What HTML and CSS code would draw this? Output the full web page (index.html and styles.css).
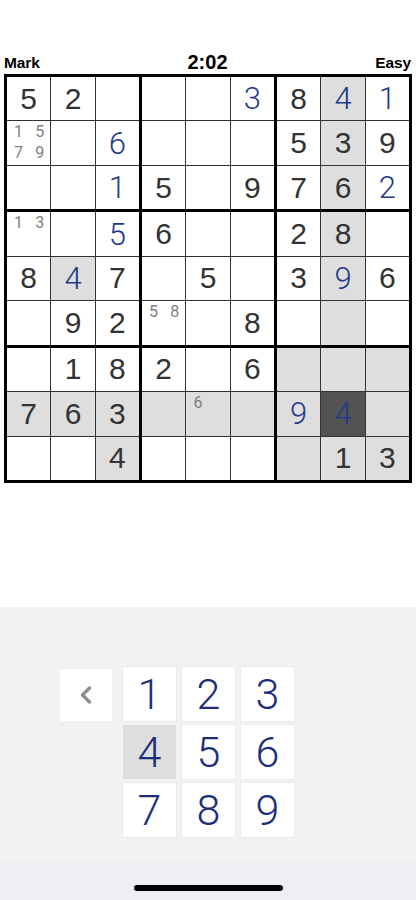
FILE: index.html
```html
<!DOCTYPE html>
<html>
<head>
<meta charset="utf-8">
<link rel="stylesheet" href="styles.css">
</head>
<body>
<div class="screen">
  <header class="top">
    <span class="mode">Mark</span>
    <span class="time">2:02</span>
    <span class="level">Easy</span>
  </header>

  <div class="board">
    <div class="box">
      <div class="cell g">5</div><div class="cell g">2</div><div class="cell"></div>
      <div class="cell"><div class="notes"><span>1</span><span>5</span><span>7</span><span>9</span></div></div><div class="cell"></div><div class="cell b">6</div>
      <div class="cell"></div><div class="cell"></div><div class="cell b">1</div>
    </div>
    <div class="box">
      <div class="cell"></div><div class="cell"></div><div class="cell b">3</div>
      <div class="cell"></div><div class="cell"></div><div class="cell"></div>
      <div class="cell g">5</div><div class="cell"></div><div class="cell g">9</div>
    </div>
    <div class="box">
      <div class="cell g">8</div><div class="cell b hl">4</div><div class="cell b">1</div>
      <div class="cell g">5</div><div class="cell g hl">3</div><div class="cell g">9</div>
      <div class="cell g">7</div><div class="cell g hl">6</div><div class="cell b">2</div>
    </div>

    <div class="box">
      <div class="cell"><div class="notes"><span>1</span><span>3</span></div></div><div class="cell"></div><div class="cell b">5</div>
      <div class="cell g">8</div><div class="cell b hl">4</div><div class="cell g">7</div>
      <div class="cell"></div><div class="cell g">9</div><div class="cell g">2</div>
    </div>
    <div class="box">
      <div class="cell g">6</div><div class="cell"></div><div class="cell"></div>
      <div class="cell"></div><div class="cell g">5</div><div class="cell"></div>
      <div class="cell"><div class="notes"><span>5</span><span>8</span></div></div><div class="cell"></div><div class="cell g">8</div>
    </div>
    <div class="box">
      <div class="cell g">2</div><div class="cell g hl">8</div><div class="cell"></div>
      <div class="cell g">3</div><div class="cell b hl">9</div><div class="cell g">6</div>
      <div class="cell"></div><div class="cell hl"></div><div class="cell"></div>
    </div>

    <div class="box">
      <div class="cell"></div><div class="cell g">1</div><div class="cell g">8</div>
      <div class="cell g hl">7</div><div class="cell g hl">6</div><div class="cell g hl">3</div>
      <div class="cell"></div><div class="cell"></div><div class="cell g hl">4</div>
    </div>
    <div class="box">
      <div class="cell g">2</div><div class="cell"></div><div class="cell g">6</div>
      <div class="cell hl"></div><div class="cell hl"><div class="notes"><span>6</span></div></div><div class="cell hl"></div>
      <div class="cell"></div><div class="cell"></div><div class="cell"></div>
    </div>
    <div class="box">
      <div class="cell hl"></div><div class="cell hl"></div><div class="cell hl"></div>
      <div class="cell b hl">9</div><div class="cell b sel">4</div><div class="cell hl"></div>
      <div class="cell hl"></div><div class="cell g hl">1</div><div class="cell g hl">3</div>
    </div>
  </div>

  <div class="spacer"></div>

  <div class="panel">
    <div class="pad">
      <button class="back" aria-label="Back">
        <svg width="14" height="18" viewBox="0 0 14 18"><polyline points="10.5,2 3.5,9 10.5,16" fill="none" stroke="#8e8e8e" stroke-width="3.4" stroke-linecap="round" stroke-linejoin="round"/></svg>
      </button>
      <div class="keys">
        <button class="key">1</button>
        <button class="key">2</button>
        <button class="key">3</button>
        <button class="key on">4</button>
        <button class="key">5</button>
        <button class="key">6</button>
        <button class="key">7</button>
        <button class="key">8</button>
        <button class="key">9</button>
      </div>
    </div>
  </div>

  <div class="home"><div class="bar"></div></div>
</div>
</body>
</html>
```

FILE: styles.css
```css
* { box-sizing: border-box; }

html, body {
  margin: 0;
  padding: 0;
  background: #ffffff;
}

body {
  font-family: "Liberation Sans", Arial, sans-serif;
  color: #000;
}

.screen {
  width: 416px;
  height: 900px;
  display: flex;
  flex-direction: column;
}

.top {
  height: 74px;
  display: grid;
  grid-template-columns: 1fr auto 1fr;
  align-items: end;
  padding: 0 5px 2px 4px;
}

.mode, .level {
  font-size: 15.5px;
  line-height: 18px;
  font-weight: 700;
  letter-spacing: -0.1px;
}

.level { text-align: right; }

.time {
  font-size: 20px;
  line-height: 19px;
  font-weight: 700;
}

.board {
  margin: 0 4px;
  width: 408px;
  height: 409px;
  background: #000;
  padding: 3px;
  display: grid;
  grid-template-columns: repeat(3, 1fr);
  grid-template-rows: repeat(3, 1fr);
  gap: 3px;
}

.box {
  background: #333;
  display: grid;
  grid-template-columns: repeat(3, 1fr);
  grid-template-rows: repeat(3, 1fr);
  gap: 1px;
}

.cell {
  background: #fff;
  display: flex;
  align-items: center;
  justify-content: center;
  font-size: 30px;
  line-height: 1;
  position: relative;
  min-width: 0;
  min-height: 0;
}

.cell.g { color: #333333; }

.cell.b {
  color: #24398a;
  font-family: Roboto, "Liberation Sans", sans-serif;
  font-weight: 300;
  font-size: 31px;
}

.cell.hl { background: #dedede; }
.cell.sel { background: #535353; }

.notes {
  align-self: stretch;
  width: 100%;
  display: grid;
  grid-template-columns: 1fr 1fr;
  grid-auto-rows: 21px;
  align-content: start;
  padding: 0 0 0 1px;
  font-family: Roboto, "Liberation Sans", sans-serif;
  font-weight: 400;
  font-size: 16px;
  line-height: 21px;
  color: #808080;
  text-align: center;
}

.spacer { height: 124px; }

.panel {
  height: 255px;
  background: #f2f2f2;
  padding: 60px 0 0 60px;
}

.pad {
  display: flex;
  align-items: flex-start;
}

button {
  border: 0;
  padding: 0;
  margin: 0;
  font: inherit;
}

.back {
  width: 52px;
  height: 52px;
  background: #fff;
  margin-top: 2px;
  margin-right: 11px;
  display: flex;
  align-items: center;
  justify-content: center;
}

.keys {
  display: grid;
  grid-template-columns: repeat(3, 53px);
  grid-template-rows: repeat(3, 54px);
  column-gap: 6px;
  row-gap: 4px;
}

.key {
  background: #fff;
  box-shadow: 0 0 0 1px #ebebeb;
  color: #1c2e7b;
  font-family: Roboto, "Liberation Sans", sans-serif;
  font-weight: 300;
  font-size: 43px;
  line-height: 54px;
  text-align: center;
}

.key.on { background: #dedede; box-shadow: none; }

.home {
  flex: 1;
  background: #efeff3;
  display: flex;
  justify-content: center;
  padding-top: 23px;
}

.bar {
  width: 149px;
  height: 6px;
  border-radius: 3px;
  background: #000;
}
```
